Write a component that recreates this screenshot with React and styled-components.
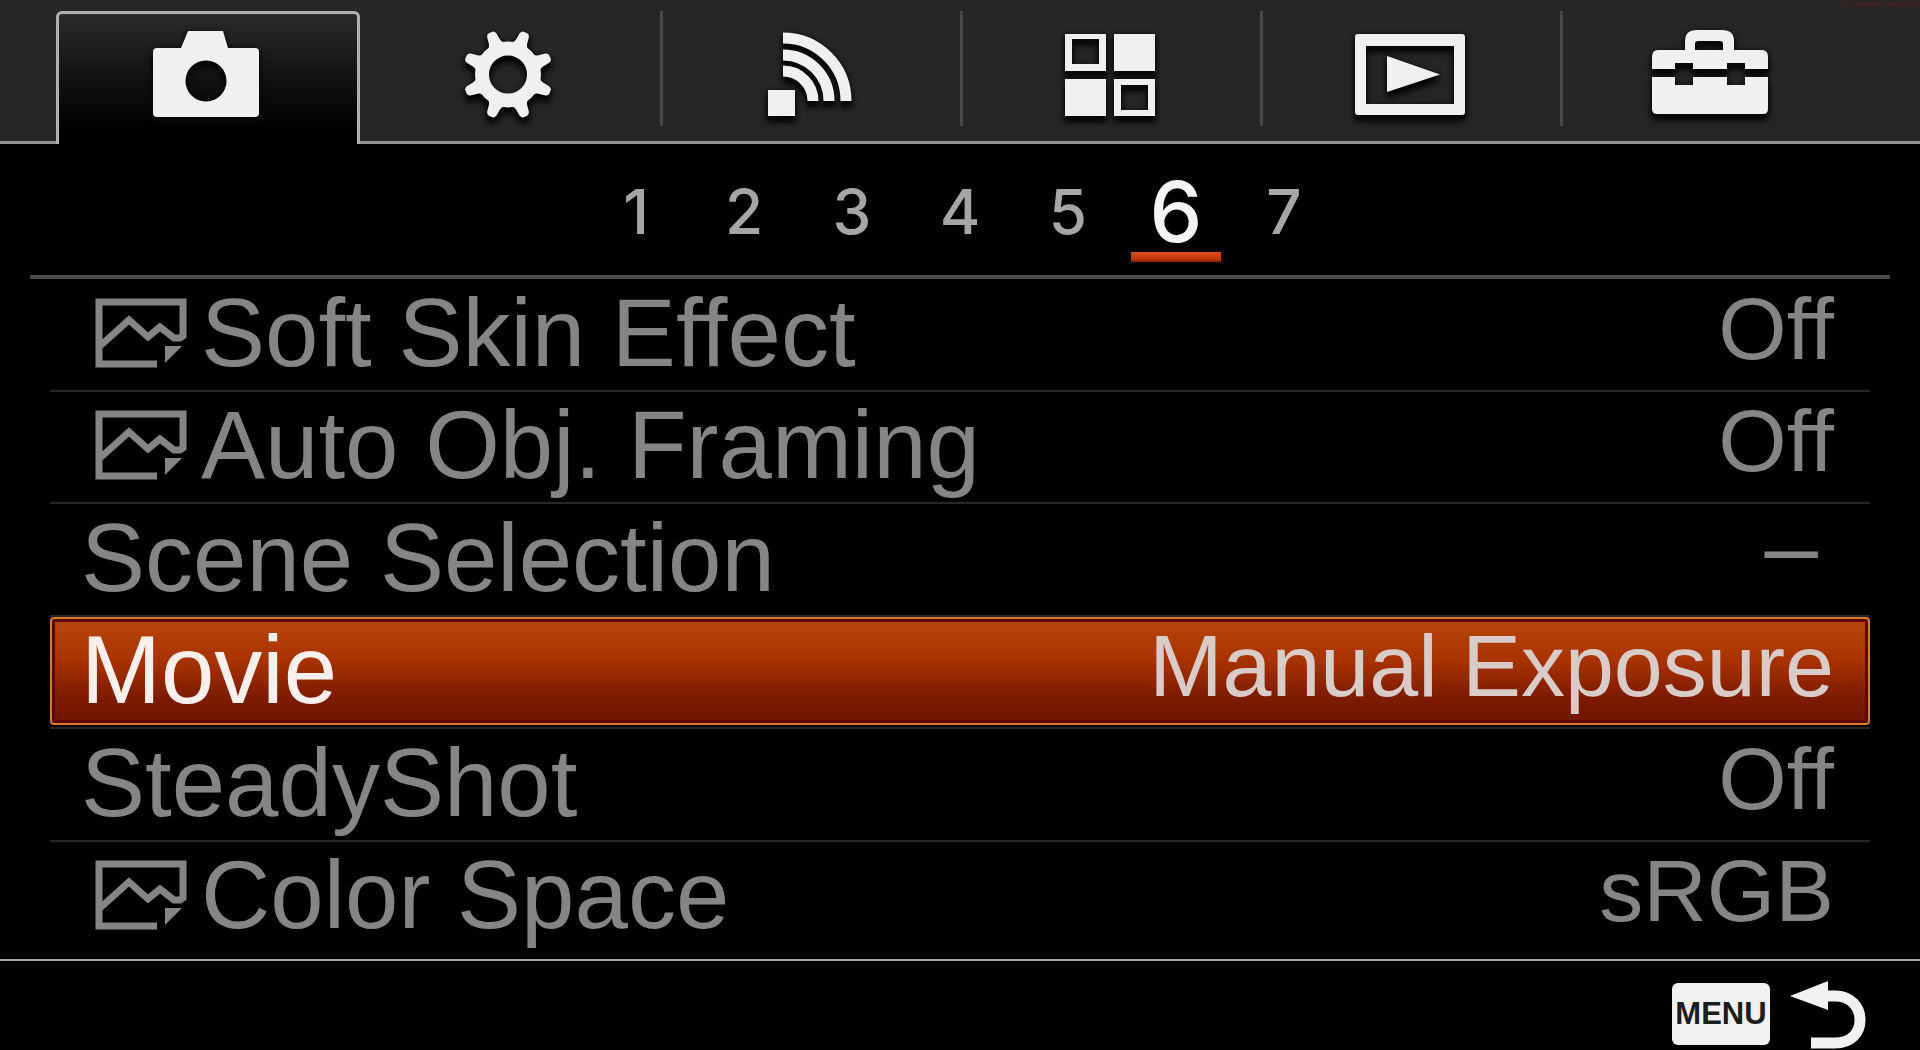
import React from 'react'
import styled, { createGlobalStyle, css } from 'styled-components'

const GlobalStyle = createGlobalStyle`
    *, *::before, *::after { box-sizing: border-box; }
    body {
        margin: 0;
        background: #000;
        font-family: 'Liberation Sans', Arial, sans-serif;
    }
    button {
        margin: 0;
        padding: 0;
        border: 0;
        background: none;
        color: inherit;
        font: inherit;
        cursor: pointer;
    }
`

const Screen = styled.div`
    position: relative;
    display: flex;
    flex-direction: column;
    min-height: 100vh;
    background: #000;
    color: #858585;
`

const Watermark = styled.span`
    position: absolute;
    top: 0;
    right: 0;
    color: #5e1a20;
    font-size: 9px;
    line-height: 9px;
`

const TabBar = styled.nav`
    display: grid;
    grid-template-columns: 1fr repeat(6, 5fr) 1fr;
    height: 144px;
    background: #262626;
`

const TabEdge = styled.div`
    border-bottom: 3px solid #929292;
`

const Tab = styled.button`
    display: flex;
    padding: 11px 0 15px;
    border-bottom: 3px solid #929292;

    ${p => p.$active && css`
        margin: 11px 0 0 -4px;
        padding: 0;
        border: 3px solid #b0b0b0;
        border-bottom: 0;
        border-radius: 6px 6px 0 0;
        background: linear-gradient(#2b2b2b, #141414 45%, #000 90%);
    `}
`

const TabFace = styled.span`
    flex: 1;
    display: flex;
    justify-content: center;
    height: 115px;
    padding-top: ${p => p.$active ? 12 : 15}px;
    padding-right: 4px;
    border-left: ${p => p.$divider ? '3px solid #484848' : '0'};
`

const TabIcon = styled.svg`
    width: 120px;
    height: 96px;
    fill: #f1eff0;
    filter: drop-shadow(0 5px 2px #080808) drop-shadow(0 1px 3px #080808);
`

const Pages = styled.nav`
    display: flex;
    justify-content: center;
    height: 131px;
`

const Page = styled.button`
    position: relative;
    width: 108px;
    padding-top: 5px;
    color: ${p => p.$active ? '#f4f4f4' : '#a6a6a6'};
    font-family: Inter, sans-serif;
    font-size: ${p => p.$active ? 84 : 62}px;
    font-weight: 500;
    line-height: 1;

    ${p => p.$active && css`
        &::after {
            content: '';
            position: absolute;
            left: 9px;
            right: 9px;
            bottom: 13px;
            height: 10px;
            background: linear-gradient(#d9521c, #c93706 60%, #8f2200);
        }
    `}
`

const Settings = styled.ul`
    flex: 1;
    display: flex;
    flex-direction: column;
    margin: 0 30px;
    padding: 0 20px 5px;
    border-top: 4px solid #4b4b4b;
    list-style: none;
`

const Setting = styled.li`
    flex: 1;
    display: flex;
    padding-bottom: 2px;
    border-bottom: 2px solid #272727;

    &:last-child { border-color: transparent; }
`

const SettingButton = styled.button`
    flex: 1;
    display: flex;
    align-items: center;
    justify-content: space-between;
    padding: 0 34px 1px 29px;
    border: 2px solid transparent;
    border-radius: 4px;

    ${p => p.$active && css`
        border-color: #d77a2c;
        background: linear-gradient(#b8460a, #a83200 40%, #7d1b00 75%, #701500);
        box-shadow: inset 0 0 0 3px #5c0a00;
        color: #fdf0ec;
    `}
`

const Label = styled.span`
    display: flex;
    align-items: center;
    font-size: 96px;
    line-height: 96px;
    white-space: nowrap;
`

const Value = styled.span`
    padding-right: ${p => p.$empty ? 16 : 0}px;
    padding-bottom: ${p => p.$empty ? 24 : 8}px;
    color: ${p => p.$active ? '#d8cbc8' : 'inherit'};
    font-size: ${p => p.$empty ? 96 : 88}px;
    line-height: 72px;
    white-space: nowrap;
`

const StillIcon = styled.svg`
    width: 92px;
    height: 70px;
    margin: 0 14px;
    fill: #858585;
`

const Footer = styled.footer`
    display: flex;
    justify-content: flex-end;
    height: 91px;
    padding: 20px 54px 0 0;
    border-top: 2px solid #a6a6a6;
`

const BackButton = styled.button`
    display: flex;
    gap: 20px;
    height: 69px;
`

const MenuKey = styled.span`
    width: 98px;
    height: 62px;
    margin-top: 2px;
    border-radius: 6px;
    background: #f1f1f1;
    color: #1c1c1c;
    font-size: 31px;
    font-weight: 700;
    line-height: 62px;
    text-align: center;
`

const BackArrow = styled.svg`
    width: 76px;
    height: 69px;
`

const gearTeeth = [0, 1, 2, 3, 4, 5, 6, 7]

const tabs = [
    { name: 'Camera Settings', icon: <path fillRule='evenodd' d='M42 5h35l5 17h27q4 0 4 4v61q0 4-4 4H11q-4 0-4-4V26q0-4 4-4h24zM60 34.500a20.500 20.500 0 1 0 .01 0z' /> },
    { name: 'Custom Settings', icon: (
        <g>
            <circle cx='60' cy='48.500' r='26' fill='none' stroke='#f1eff0' strokeWidth='14' />
            {gearTeeth.map(i => (
                <path
                    key={i}
                    transform={`rotate(${i * 45 + 22.5} 60 48.500)`}
                    d='M48 20q5-2 6-7l1-7q1-3 3-3h4q2 0 3 3l1 7q1 5 6 7z' />
            ))}
        </g>
    ) },
    { name: 'Wireless', icon: (
        <g>
            <path d='M18 64h27v26H18z' />
            <path fill='none' stroke='#f1eff0' strokeWidth='11' d='M33 12a63 63 0 0 1 63 63M33 29a46 46 0 0 1 46 46M33 45a30 30 0 0 1 30 30' />
        </g>
    ) },
    { name: 'Applications', icon: <path fillRule='evenodd' d='M15 8h41v37H15zM22 13v25h27V13zM64 8h41v37H64zM15 53h41v37H15zM64 53h41v37H64zM71 59v25h27V59z' /> },
    { name: 'Playback', icon: (
        <g>
            <path fillRule='evenodd' d='M8 8h104q3 0 3 3v75q0 3-3 3H8q-3 0-3-3V11q0-3 3-3zM16 20v58h88V20z' />
            <path d='M37 30l53 18.500L37 66z' />
        </g>
    ) },
    { name: 'Setup', icon: (
        <g>
            <path fillRule='evenodd' d='M35 24v-9q0-11 12-11h25q12 0 12 11v9h28q6 0 6 7v12H95v-6H77v6H43v-6H25v6H2V31q0-7 6-7zM45 24h28v-6q0-3-3-3H48q-3 0-3 3z' />
            <path d='M2 51h23v8h18v-8h34v8h18v-8h23v32q0 5-5 5H7q-5 0-5-5z' />
        </g>
    ) },
]

const pages = [1, 2, 3, 4, 5, 6, 7]

const settings = [
    { label: 'Soft Skin Effect', value: 'Off', still: true },
    { label: 'Auto Obj. Framing', value: 'Off', still: true },
    { label: 'Scene Selection', value: '–', empty: true },
    { label: 'Movie', value: 'Manual Exposure', active: true },
    { label: 'SteadyShot', value: 'Off' },
    { label: 'Color Space', value: 'sRGB', still: true },
]

const Still = () => (
    <StillIcon viewBox='0 0 92 70' aria-hidden='true'>
        <path
            fill='none' stroke='#858585' strokeWidth='7'
            d='M62 66H4V4h84v34l-3 2h-6L65 29 53 39 34 22 5 48' />
        <path d='M70 48h17L70 65z' />
    </StillIcon>
)

export default function App() {
    return (
        <Screen>
            <GlobalStyle />

            <TabBar>
                <TabEdge />
                {tabs.map((tab, i) => (
                    <Tab key={tab.name} aria-label={tab.name} $active={i === 0}>
                        <TabFace $active={i === 0} $divider={i > 1}>
                            <TabIcon viewBox='0 0 120 96'>{tab.icon}</TabIcon>
                        </TabFace>
                    </Tab>
                ))}
                <TabEdge />
            </TabBar>
            <Watermark>© CameraNews.Org</Watermark>

            <Pages>
                {pages.map(n => <Page key={n} $active={n === 6}>{n}</Page>)}
            </Pages>

            <Settings>
                {settings.map(({ label, value, still, empty, active }) => (
                    <Setting key={label}>
                        <SettingButton $active={active}>
                            <Label>{still && <Still />}{label}</Label>
                            <Value $active={active} $empty={empty}>{value}</Value>
                        </SettingButton>
                    </Setting>
                ))}
            </Settings>

            <Footer>
                <BackButton>
                    <MenuKey>MENU</MenuKey>
                    <BackArrow viewBox='0 0 76 69' aria-hidden='true'>
                        <path fill='#f1f1f1' d='M0 15L38 0v29z' />
                        <path fill='none' stroke='#f1f1f1' strokeWidth='11' d='M36 15h9c16 0 25 11 25 24s-9 23-25 23H21' />
                    </BackArrow>
                </BackButton>
            </Footer>
        </Screen>
    )
}
